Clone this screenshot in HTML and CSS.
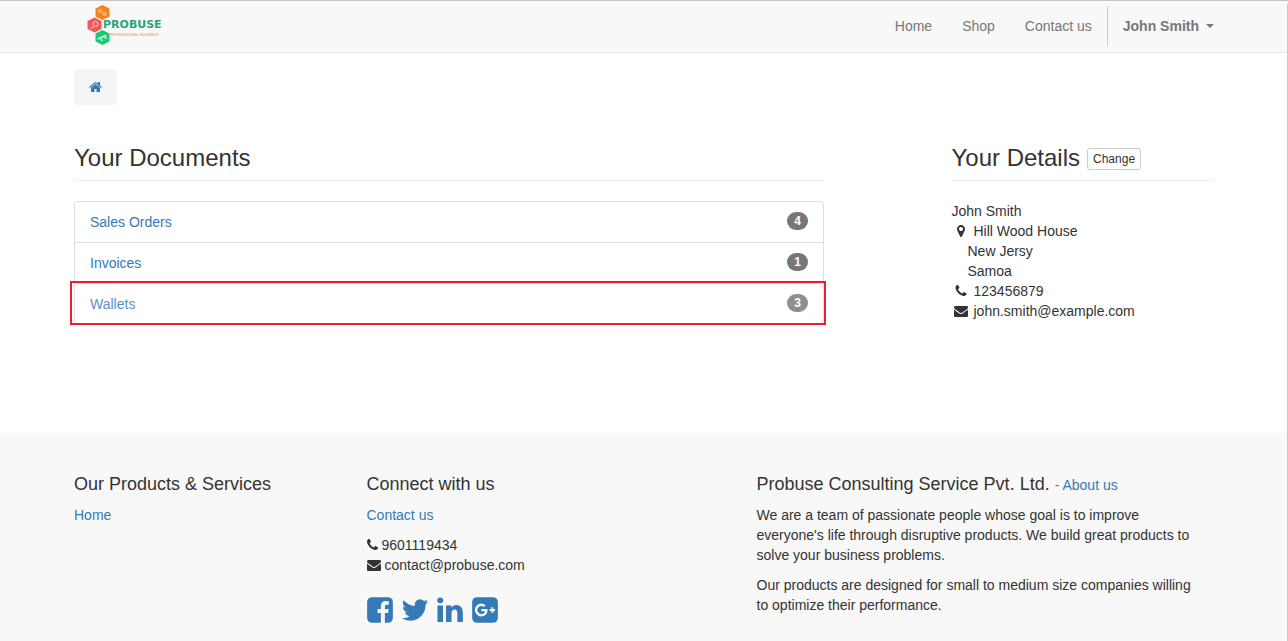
FILE: index.html
```html
<!DOCTYPE html>
<html lang="en">
<head>
<meta charset="utf-8">
<title>My Account</title>
<link rel="stylesheet" href="styles.css">
</head>
<body>
<svg class="sprite" aria-hidden="true">
  <symbol id="phone" viewBox="0 0 1792 1792"><path d="M1600 1240q0 27-10 70.5t-21 68.5q-21 50-122 106-94 51-186 51-27 0-53-3.5t-57.5-12.5-47-14.5-55.5-20.5-49-18q-98-35-175-83-127-79-264-216t-216-264q-48-77-83-175-3-9-18-49t-20.500-55.500-14.500-47-12.500-57.500-3.500-53q0-92 51-186 56-101 106-122 25-11 68.500-21t70.500-10q14 0 21 3 18 6 53 76 11 19 30 54t35 63.500 31 53.500q3 4 17.500 25t21.500 35.500 7 28.500q0 20-28.500 50t-62 55-62 53-28.500 46q0 9 5 22.500t8.500 20.500 14 24 11.500 19q76 137 174 235t235 174q2 1 19 11.500t24 14 20.500 8.500 22.500 5q18 0 46-28.500t53-62 55-62 50-28.500q14 0 28.500 7t35.500 21.500 25 17.500q25 15 53.500 31t63.500 35 54 30q70 35 76 53 3 7 3 21z"/></symbol>
  <symbol id="envelope" viewBox="0 0 1792 1792"><path d="M1792 710v794q0 66-47 113t-113 47h-1472q-66 0-113-47t-47-113v-794q44 49 101 87 362 246 497 345 57 42 92.5 65.5t94.5 48 110 24.5h2q51 0 110-24.5t94.5-48 92.5-65.5q170-123 498-345 57-39 100-87zm0-294q0 79-49 151t-122 123q-376 261-468 325-10 7-42.5 31t-54 38.5-52 32.5-57.5 27-50 9h-2q-23 0-50-9t-57.5-27-52-32.500-54-38.500-42.500-31q-91-64-262-182.500t-205-142.500q-62-42-117-115.500t-55-136.500q0-78 41.500-130t118.500-52h1472q65 0 112.500 47t47.500 113z"/></symbol>
</svg>

<header class="navbar">
  <div class="container navbar-inner">
    <a class="brand" href="#" aria-label="Probuse">
      <svg class="logo" viewBox="0 0 80 42" aria-hidden="true">
        <path fill="#f58220" d="M14.500 0l7 3.500v8l-7 3.500-7-3.500v-8z"/>
        <path fill="#f0595a" d="M6.500 12.500l7 3.500v8l-7 3.500-7-3.500v-8z"/>
        <path fill="#17c877" d="M14.500 25l7 3.500v8l-7 3.500-7-3.500v-8z"/>
        <g fill="none" stroke="#fff" stroke-width="1" opacity=".7">
          <circle cx="12.500" cy="6" r="1.500"/><circle cx="16.500" cy="9" r="1.500"/>
          <circle cx="7.500" cy="19" r="2.500"/><path d="M5.500 21l-3 3"/>
          <path stroke-width="1.500" d="M9.500 34l9-4M12 33l2.500 3M15 32l4 1"/>
        </g>
        <text class="logo-name" x="15" y="23">PROBUSE</text>
        <text class="logo-tag" x="22" y="31">PROFESSIONAL BUSINESS</text>
      </svg>
    </a>
    <nav class="menu">
      <a href="#">Home</a>
      <a href="#">Shop</a>
      <a href="#">Contact us</a>
      <span class="divider"></span>
      <button type="button" class="user" aria-haspopup="true">John Smith <span class="caret"></span></button>
    </nav>
  </div>
</header>

<main class="container main">
  <nav class="breadcrumb">
    <a href="#" aria-label="Home"><svg class="icon home" viewBox="64 0 1664 1792"><path d="M1472 992v480q0 26-19 45t-45 19h-384v-384h-256v384h-384q-26 0-45-19t-19-45v-480q0-1 .5-3t.5-3l575-474 575 474q1 2 1 6zm223-69l-62 74q-8 9-21 11h-3q-13 0-21-7l-692-577-692 577q-12 8-24 7-13-2-21-11l-62-74q-8-10-7-23.500t11-21.500l719-599q32-26 76-26t76 26l244 204v-195q0-14 9-23t23-9h192q14 0 23 9t9 23v408l219 182q10 8 11 21.500t-7 23.500z"/></svg></a>
  </nav>
  <div class="grid">
    <section class="documents">
      <h3 class="title">Your Documents</h3>
      <ul class="list">
        <li><a href="#">Sales Orders</a><span class="badge">4</span></li>
        <li><a href="#">Invoices</a><span class="badge">1</span></li>
        <li class="marked"><a href="#">Wallets</a><span class="badge">3</span></li>
      </ul>
    </section>
    <section class="details">
      <h3 class="title">Your Details <button type="button" class="change">Change</button></h3>
      <address class="address">
        <div>John Smith</div>
        <div class="row"><svg class="icon" viewBox="0 0 1792 1792"><path d="M1152 640q0-106-75-181t-181-75-181 75-75 181 75 181 181 75 181-75 75-181zm256 0q0 109-33 179l-364 774q-16 33-47.500 52t-67.500 19-67.500-19-46.500-52l-365-774q-33-70-33-179 0-212 150-362t362-150 362 150 150 362z"/></svg>Hill Wood House</div>
        <div class="indent">New Jersy</div>
        <div class="indent">Samoa</div>
        <div class="row"><svg class="icon"><use href="#phone"/></svg>123456879</div>
        <div class="row"><svg class="icon"><use href="#envelope"/></svg>john.smith@example.com</div>
      </address>
    </section>
  </div>
</main>

<footer class="footer">
  <div class="container footer-grid">
    <section class="products">
      <h4>Our Products &amp; Services</h4>
      <p><a href="#">Home</a></p>
    </section>
    <section class="connect">
      <h4>Connect with us</h4>
      <p><a href="#">Contact us</a></p>
      <div class="contact"><svg class="icon phone" viewBox="192 0 1408 1792"><use href="#phone" width="1792" height="1792"/></svg>9601119434</div>
      <div class="contact"><svg class="icon"><use href="#envelope"/></svg>contact@probuse.com</div>
      <div class="social">
        <a href="#" aria-label="Facebook"><svg viewBox="128 0 1536 1792"><path d="M1376 128q119 0 203.500 84.500t84.500 203.500v960q0 119-84.500 203.500t-203.500 84.500h-188v-595h199l30-232h-229v-148q0-56 23.500-84t91.500-28l122-1v-207q-63-9-178-9-136 0-217.500 80t-81.500 226v171h-200v232h200v595h-532q-119 0-203.500-84.500t-84.500-203.500v-960q0-119 84.500-203.500t203.500-84.500h960z"/></svg></a>
        <a href="#" aria-label="Twitter"><svg viewBox="128 0 1536 1792"><path d="M1684 408q-67 98-162 167 1 14 1 42 0 130-38 259.500t-115.500 248.500-184.500 210.500-258 146-323 54.500q-271 0-496-145 35 4 78 4 225 0 401-138-105-2-188-64.500t-114-159.500q33 5 61 5 43 0 85-11-112-23-185.500-111.500t-73.500-205.500v-4q68 38 146 41-66-44-105-115t-39-154q0-88 44-163 121 149 294.500 238.500t371.500 99.500q-8-38-8-74 0-134 94.500-228.500t228.500-94.500q140 0 236 102 109-21 205-78-37 115-142 178 93-10 186-50z"/></svg></a>
        <a href="#" aria-label="LinkedIn"><svg viewBox="128 0 1536 1792"><path d="M477 625v991h-330v-991h330zm21-306q1 73-50.500 122t-135.500 49h-2q-82 0-132-49t-50-122q0-74 51.500-122.500t134.500-48.500 133 48.500 51 122.500zm1166 729v568h-329v-530q0-105-40.500-164.500t-126.500-59.500q-63 0-105.500 34.500t-63.500 85.500q-11 30-11 81v553h-329q2-399 2-647t-1-296l-1-48h329v144h-2q20-32 41-56t56.500-52 87-43.500 114.500-15.500q171 0 275 113.500t104 332.500z"/></svg></a>
        <a href="#" aria-label="Google Plus"><svg viewBox="128 0 1536 1792"><path d="M1045 905q0-26-6-64h-362v132h217q-3 24-16.500 50t-37.500 53-66.500 44.500-96.500 17.500q-99 0-169-71t-70-171 70-171 169-71q92 0 153 59l104-101q-108-100-257-100-160 0-272 112.500t-112 271.500 112 271.500 272 112.500q165 0 266.500-105t101.500-270zm345 46h109v-110h-109v-110h-110v110h-110v110h110v110h110v-110zm274-535v960q0 119-84.500 203.500t-203.500 84.500h-960q-119 0-203.500-84.500t-84.500-203.500v-960q0-119 84.500-203.500t203.500-84.500h960q119 0 203.500 84.500t84.500 203.500z"/></svg></a>
      </div>
    </section>
    <section class="about">
      <h4>Probuse Consulting Service Pvt. Ltd. <small>- <a href="#">About us</a></small></h4>
      <p>We are a team of passionate people whose goal is to improve everyone's life through disruptive products. We build great products to solve your business problems.</p>
      <p>Our products are designed for small to medium size companies willing to optimize their performance.</p>
    </section>
  </div>
</footer>
</body>
</html>
```

FILE: styles.css
```css
* { box-sizing: border-box; }

body {
  margin: 0;
  min-height: 100vh;
  display: flex;
  flex-direction: column;
  border-top: 1px solid #c8c4c1;
  background: #fff;
  color: #333;
  font: 14px/20px "Liberation Sans", Arial, sans-serif;
}

/* Thin rule along the window's right edge */
body::after {
  content: "";
  position: fixed;
  inset: 4px 0 0 auto;
  width: 1px;
  background: #c8c8c8;
}

a { color: #337ab7; text-decoration: none; }
h3, h4, p, ul { margin: 0; padding: 0; }
h3, h4 { font-weight: 400; }
svg { display: block; fill: currentColor; }
button { font-family: inherit; cursor: pointer; }

.sprite { display: none; }
.icon { width: 14px; height: 14px; flex: none; }

.container {
  width: 100%;
  max-width: 1170px;
  margin: 0 auto;
  padding: 0 15px;
}

/* Top bar */
.navbar { background: #f8f8f8; border-bottom: 1px solid #e7e7e7; }
.navbar-inner {
  display: flex;
  justify-content: space-between;
  align-items: center;
  padding: 4px 15px 5px;
}
.brand { padding-left: 14px; }
.logo { width: 80px; height: 42px; overflow: visible; }
.logo-name { font: bold 11px "DejaVu Sans", sans-serif; fill: #2ba476; }
.logo-tag { font: 4px Lato, sans-serif; fill: #f58a3c; }

.menu { display: flex; align-items: center; }
.menu a { padding: 0 15px; color: #777; }
.divider { width: 1px; height: 40px; background: #ccc; }
.user {
  display: flex;
  align-items: center;
  gap: 7px;
  padding: 0 0 0 15px;
  border: 0;
  background: none;
  color: #777;
  font-size: 14px;
  font-weight: 700;
  line-height: 20px;
}
.caret {
  border-top: 4px solid;
  border-left: 4px solid transparent;
  border-right: 4px solid transparent;
}

/* Account page */
.main { padding-top: 16px; padding-bottom: 108px; }
.breadcrumb {
  width: fit-content;
  padding: 11px 15px;
  background: #f5f5f5;
  border-radius: 4px;
}
.home { width: 13px; }
.grid {
  display: grid;
  grid-template-columns: repeat(12, 1fr);
  column-gap: 30px;
  margin-top: 36px;
}
.documents { grid-column: 1 / span 8; }
.details { grid-column: 10 / span 3; }
.title {
  display: flex;
  align-items: center;
  gap: 7px;
  height: 40px;
  padding-bottom: 6px;
  border-bottom: 1px solid #eee;
  font-size: 24px;
  line-height: 26px;
}
.change {
  margin-top: 2px;
  padding: 1px 5px;
  border: 1px solid #ccc;
  border-radius: 3px;
  background: #fff;
  color: #333;
  font-size: 12px;
  line-height: 18px;
}

.list {
  margin-top: 20px;
  list-style: none;
  border: 1px solid #ddd;
  border-radius: 4px;
}
.list li {
  position: relative;
  display: flex;
  justify-content: space-between;
  align-items: flex-start;
  padding: 10px 15px;
}
.list li + li { border-top: 1px solid #ddd; }
.badge {
  padding: 3px 7px;
  border-radius: 10px;
  background: #777;
  color: #fff;
  font-size: 12px;
  font-weight: 700;
  line-height: 12px;
}
.marked::after {
  content: "";
  position: absolute;
  inset: -3px -3px -1px -5px;
  border: 2px solid #ed1c2e;
  background: rgba(255, 255, 255, .18);
  pointer-events: none;
}

.address { margin-top: 20px; font-style: normal; }
.row { display: flex; align-items: center; gap: 6px; padding-left: 2px; }
.indent { padding-left: 16px; }

/* Footer */
.footer { flex: 1; background: #f8f8f8; }
.footer-grid {
  display: grid;
  grid-template-columns: 3fr 4fr 5fr;
  padding: 41px 0 0;
}
.footer-grid section { padding: 0 15px; }
.footer-grid .about { padding-right: 25px; }
.footer h4 { margin-bottom: 11px; font-size: 18px; line-height: 20px; }
.footer p { margin-bottom: 10px; }
.footer small { color: #777; font-size: 14px; line-height: 1; }
.contact { display: flex; align-items: center; gap: 4px; }
.phone { width: 11px; }
.social { display: flex; gap: 9px; margin-top: 20px; }
.social svg { width: 26px; height: 30px; overflow: visible; }
```
